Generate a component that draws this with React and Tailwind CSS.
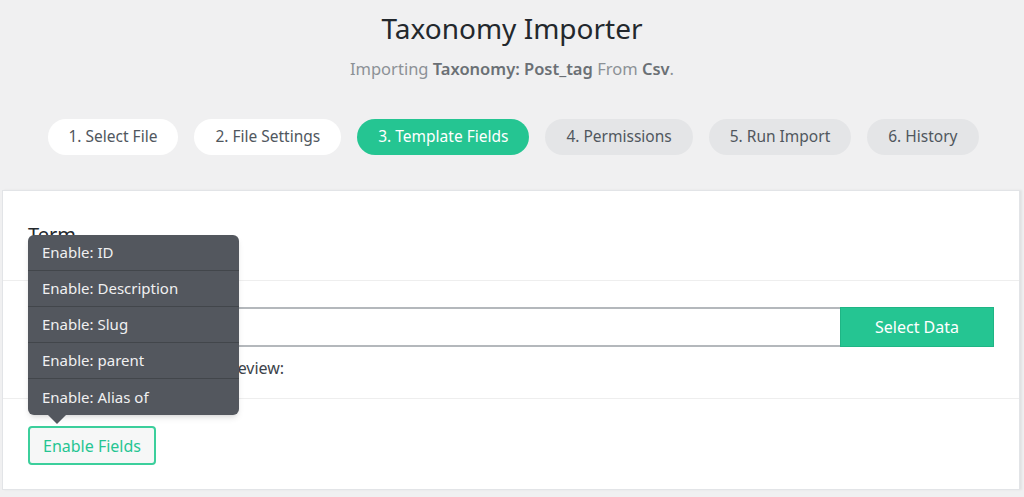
export default function App() {
  const tabs = [
    { label: "1. Select File", cls: "bg-white text-[#50575e]" },
    { label: "2. File Settings", cls: "bg-white text-[#50575e]" },
    { label: "3. Template Fields", cls: "bg-[#25c592] text-white" },
    { label: "4. Permissions", cls: "bg-[#e4e5e7] text-[#50575e]" },
    { label: "5. Run Import", cls: "bg-[#e4e5e7] text-[#50575e]" },
    { label: "6. History", cls: "bg-[#e4e5e7] text-[#50575e]" },
  ];
  const items = ["Enable: ID", "Enable: Description", "Enable: Slug", "Enable: parent", "Enable: Alias of"];
  return (
    <div className="w-[1024px] h-[497px] overflow-hidden bg-[#f0f0f1]" style={{ fontFamily: '"Noto Sans", "Open Sans", sans-serif' }}>
      <div className="pt-[8px] text-center">
        <h1 className="text-[28px] leading-[40px] text-[#23282d]">Taxonomy Importer</h1>
        <p className="mt-[10px] text-[16.5px] leading-[22px] text-[#8c9196]">
          Importing <b className="font-semibold text-[#6b7075]">Taxonomy: Post_tag</b> From <b className="font-semibold text-[#6b7075]">Csv</b>.
        </p>
      </div>
      <div className="mt-[39px] flex justify-center gap-[16px] pl-[2px]">
        {tabs.map((t) => (
          <div key={t.label} className={`h-[36px] px-[21px] rounded-full flex items-center text-[15.5px] ${t.cls}`}>{t.label}</div>
        ))}
      </div>
      <div className="relative mt-[35px] ml-[2px] w-[1018px] h-[300px] bg-white border border-[#e2e4e7] shadow-[2px_0_2px_rgba(0,0,0,0.06)]">
        <div className="h-[90px] px-[25px] pt-[30px] border-b border-[#eeeeee]">
          <h2 className="text-[20px] leading-[28px] text-[#23282d]">Term</h2>
        </div>
        <div className="h-[118px] px-[25px] pt-[26px] border-b border-[#eeeeee]">
          <div className="flex h-[40px]">
            <div className="flex-1 border-y-2 border-l-2 border-[#b4b8bc]"></div>
            <button className="w-[154px] bg-[#25c592] border border-[#1fb585] text-white text-[16px]">Select Data</button>
          </div>
          <p className="mt-[11px] text-[16px] leading-[20px] text-[#3c434a] pl-[120px]">Template Preview:</p>
        </div>
        <div className="px-[25px] pt-[27px]">
          <button className="h-[39px] px-[13px] rounded-[4px] border-2 border-[#3ccf9c] bg-[#f6f7f7] text-[#25c592] text-[16px]">Enable Fields</button>
        </div>
        <div className="absolute left-[25px] top-[44px] w-[211px] rounded-[6px] bg-[#53575e] shadow-md">
          {items.map((it, i) => (
            <div key={it} className={`h-[36px] flex items-center px-[14px] text-[15px] text-[#f0f0f1] ${i < items.length - 1 ? "border-b border-[#42464b]" : ""}`}>{it}</div>
          ))}
          <div className="absolute left-[20px] -bottom-[9px] w-0 h-0 border-l-[9px] border-r-[9px] border-t-[9px] border-l-transparent border-r-transparent border-t-[#53575e]"></div>
        </div>
      </div>
    </div>
  );
}
